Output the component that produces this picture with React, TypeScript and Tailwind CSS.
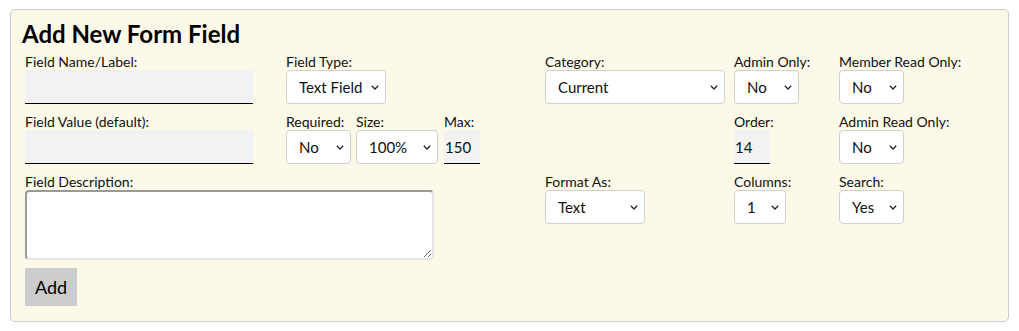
import React from 'react';

function Label({ children }: { children: React.ReactNode }) {
  return <div className="text-[14px] leading-[16px] text-[#111] whitespace-nowrap">{children}</div>;
}

function Select({ value, width }: { value: string; width: string }) {
  return (
    <div className={`relative h-[34px] ${width}`}>
      <select
        defaultValue={value}
        className="appearance-none w-full h-full bg-white border border-[#cfcfcf] rounded-[4px] pl-[12px] pr-[20px] text-[15px] text-[#111] outline-none"
      >
        <option>{value}</option>
      </select>
      <svg
        className="pointer-events-none absolute right-[7px] top-[15px]"
        width="8"
        height="5"
        viewBox="0 0 8 5"
        fill="none"
      >
        <path d="M0.8 0.8 L4 4 L7.2 0.8" stroke="#222" strokeWidth="1.3" />
      </svg>
    </div>
  );
}

function TextInput({ value = '', width }: { value?: string; width: string }) {
  return (
    <input
      defaultValue={value}
      className={`h-[34px] ${width} bg-[#f2f2f2] border-0 border-b border-b-black px-[1px] text-[15px] text-[#111] outline-none`}
    />
  );
}

export default function App() {
  return (
    <div className="min-h-screen bg-white font-['Lato',sans-serif] pt-[9px] px-[10px]">
      <div className="border border-[#cccccc] rounded-[5px] bg-[#fdf9e9] pl-[14px] pt-[10px] pb-[15px]">
        <h2 className="ml-[-3px] text-[24px] leading-[28px] font-bold text-black mb-[6px]">Add New Form Field</h2>

        {/* ligne 1 */}
        <div className="flex">
          <div className="w-[261px]">
            <Label>Field Name/Label:</Label>
            <TextInput width="w-[228px]" />
          </div>
          <div className="w-[259px]">
            <Label>Field Type:</Label>
            <Select value="Text Field" width="w-[100px]" />
          </div>
          <div className="w-[189px]">
            <Label>Category:</Label>
            <Select value="Current" width="w-[180px]" />
          </div>
          <div className="w-[105px]">
            <Label>Admin Only:</Label>
            <Select value="No" width="w-[65px]" />
          </div>
          <div>
            <Label>Member Read Only:</Label>
            <Select value="No" width="w-[65px]" />
          </div>
        </div>

        {/* ligne 2 */}
        <div className="flex mt-[10px]">
          <div className="w-[261px]">
            <Label>Field Value (default):</Label>
            <TextInput width="w-[228px]" />
          </div>
          <div className="w-[70px]">
            <Label>Required:</Label>
            <Select value="No" width="w-[65px]" />
          </div>
          <div className="w-[88px]">
            <Label>Size:</Label>
            <Select value="100%" width="w-[82px]" />
          </div>
          <div className="w-[290px]">
            <Label>Max:</Label>
            <TextInput value="150" width="w-[36px]" />
          </div>
          <div className="w-[105px]">
            <Label>Order:</Label>
            <TextInput value="14" width="w-[36px]" />
          </div>
          <div>
            <Label>Admin Read Only:</Label>
            <Select value="No" width="w-[65px]" />
          </div>
        </div>

        {/* ligne 3 */}
        <div className="flex mt-[10px]">
          <div className="w-[520px]">
            <Label>Field Description:</Label>
            <textarea className="block w-[409px] h-[70px] bg-white border-2 border-t-[#9a9a9a] border-l-[#9a9a9a] border-b-[#e4e4e4] border-r-[#e4e4e4] rounded-[4px] outline-none" />
          </div>
          <div className="w-[189px]">
            <Label>Format As:</Label>
            <Select value="Text" width="w-[100px]" />
          </div>
          <div className="w-[105px]">
            <Label>Columns:</Label>
            <Select value="1" width="w-[52px]" />
          </div>
          <div>
            <Label>Search:</Label>
            <Select value="Yes" width="w-[65px]" />
          </div>
        </div>

        <button className="mt-[8px] h-[38px] w-[52px] bg-[#cccccc] text-[18px] text-black">Add</button>
      </div>
    </div>
  );
}
